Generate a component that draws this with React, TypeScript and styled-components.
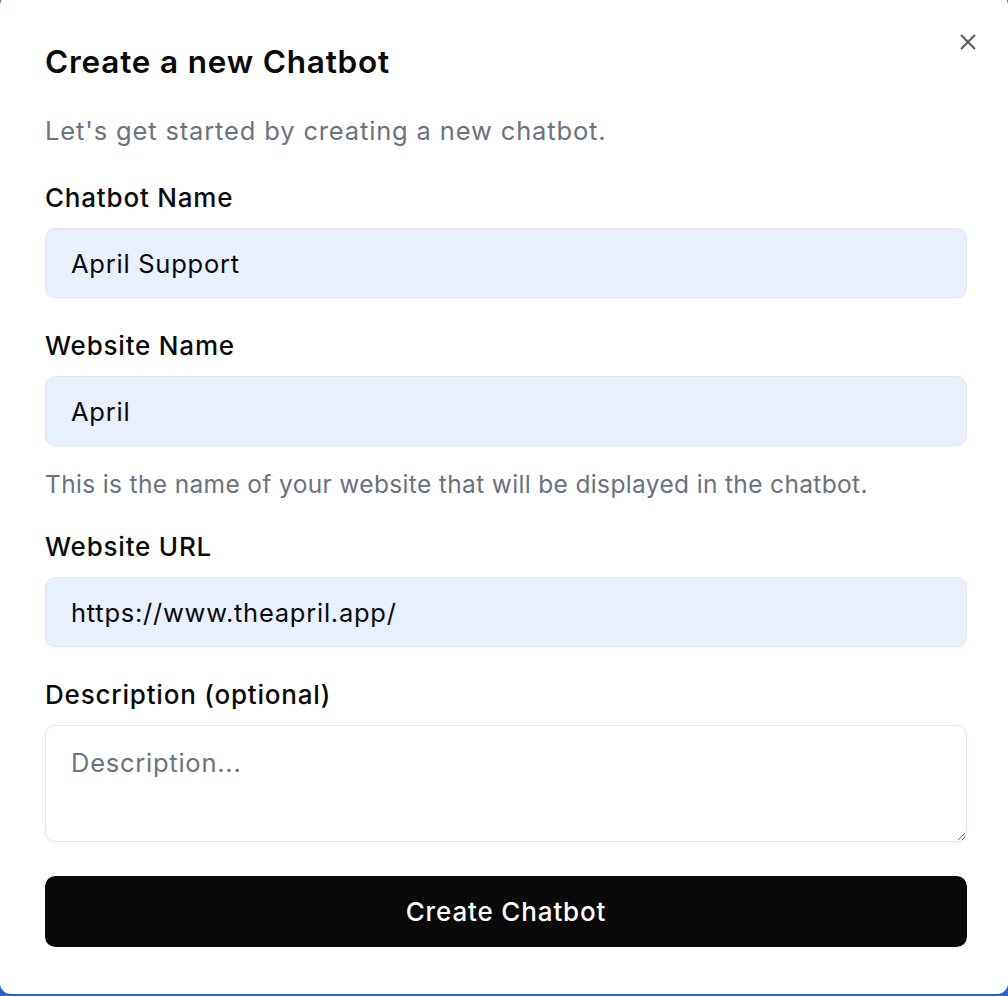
import React, { useState } from "react";
import styled, { createGlobalStyle } from "styled-components";

const GlobalStyle = createGlobalStyle`
  html, body {
    margin: 0;
    padding: 0;
    background: #2c62d3;
    overflow: hidden;
  }
  * {
    box-sizing: border-box;
  }
`;

const Card = styled.div`
  width: 1008px;
  height: 1000px;
  margin-top: -6px;
  background: #ffffff;
  border-radius: 11px;
  padding: 50px 41px 0 45px;
  position: relative;
  font-family: Inter, "Noto Sans", sans-serif;
  color: #0a0a0a;
`;

const CloseButton = styled.button`
  position: absolute;
  top: 36px;
  right: 28px;
  width: 24px;
  height: 24px;
  padding: 0;
  border: none;
  background: transparent;
  display: flex;
  align-items: center;
  justify-content: center;
  cursor: pointer;
  opacity: 0.8;
`;

const Title = styled.h2`
  margin: 0;
  font-size: 31.5px;
  line-height: 36px;
  font-weight: 600;
  letter-spacing: 0.8px;
`;

const Subtitle = styled.p`
  margin: 36px 0 0;
  font-size: 25.5px;
  line-height: 30px;
  color: #6b7280;
  letter-spacing: 0.85px;
`;

const Form = styled.form`
  display: flex;
  flex-direction: column;
  gap: 33px;
  margin-top: 37px;
`;

const Field = styled.div`
  display: flex;
  flex-direction: column;
`;

const Label = styled.label`
  font-size: 26px;
  line-height: 30px;
  font-weight: 500;
  letter-spacing: 0.8px;
  margin-bottom: 15px;
`;

const Input = styled.input<{ $filled?: boolean }>`
  width: 100%;
  height: 70px;
  padding: 0 25px;
  font-family: inherit;
  font-size: 25.5px;
  letter-spacing: 0.75px;
  color: #0a0a0a;
  background: ${(p) => (p.$filled ? "#e8effd" : "#ffffff")};
  border: 1.5px solid #e4e6ec;
  border-radius: 10.5px;
  box-shadow: 0 1px 3px rgba(0, 0, 0, 0.05);
  outline: none;
`;

const TextArea = styled.textarea`
  width: 100%;
  height: 117px;
  padding: 20px 25px;
  font-family: inherit;
  font-size: 25.5px;
  letter-spacing: 0.75px;
  line-height: 34px;
  color: #0a0a0a;
  background: #ffffff;
  border: 1.5px solid #e4e6ec;
  border-radius: 10.5px;
  box-shadow: 0 1px 3px rgba(0, 0, 0, 0.05);
  outline: none;
  resize: vertical;
  &::placeholder {
    color: #6b7280;
  }
`;

const Hint = styled.p`
  margin: 23px 0 0;
  font-size: 24.5px;
  line-height: 30px;
  letter-spacing: 0.35px;
  color: #6b7280;
`;

const SubmitButton = styled.button`
  width: 100%;
  height: 71px;
  margin-top: 1px;
  border: none;
  border-radius: 10.5px;
  background: #0a0a0a;
  color: #ffffff;
  font-family: inherit;
  font-size: 26px;
  font-weight: 500;
  letter-spacing: 0.85px;
  cursor: pointer;
`;

export default function App() {
  const [name, setName] = useState("April Support");
  const [site, setSite] = useState("April");
  const [url, setUrl] = useState("https://www.theapril.app/");
  const [desc, setDesc] = useState("");

  return (
    <>
      <GlobalStyle />
      <Card>
        <CloseButton aria-label="Close">
          <svg width="22" height="22" viewBox="0 0 24 24" fill="none" stroke="#333" strokeWidth="2.2" strokeLinecap="round">
            <path d="M19 5L5 19M5 5l14 14" />
          </svg>
        </CloseButton>
        <Title>Create a new Chatbot</Title>
        <Subtitle>Let's get started by creating a new chatbot.</Subtitle>
        <Form onSubmit={(e) => e.preventDefault()}>
          <Field>
            <Label>Chatbot Name</Label>
            <Input $filled value={name} onChange={(e) => setName(e.target.value)} />
          </Field>
          <Field>
            <Label>Website Name</Label>
            <Input $filled value={site} onChange={(e) => setSite(e.target.value)} />
            <Hint>This is the name of your website that will be displayed in the chatbot.</Hint>
          </Field>
          <Field>
            <Label>Website URL</Label>
            <Input $filled value={url} onChange={(e) => setUrl(e.target.value)} />
          </Field>
          <Field>
            <Label>Description (optional)</Label>
            <TextArea placeholder="Description..." value={desc} onChange={(e) => setDesc(e.target.value)} />
          </Field>
          <SubmitButton type="submit">Create Chatbot</SubmitButton>
        </Form>
      </Card>
    </>
  );
}
